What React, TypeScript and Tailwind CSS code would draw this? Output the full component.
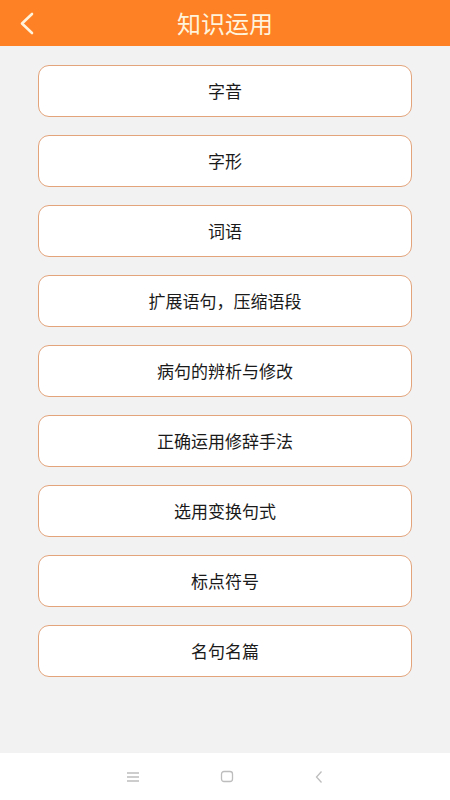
import React from 'react';

const items = [
  '字音',
  '字形',
  '词语',
  '扩展语句，压缩语段',
  '病句的辨析与修改',
  '正确运用修辞手法',
  '选用变换句式',
  '标点符号',
  '名句名篇',
];

export default function App() {
  return (
    <div
      className="flex flex-col w-[450px] h-[800px] bg-[#f2f2f2]"
      style={{ fontFamily: '"Noto Sans CJK SC", "Noto Sans", sans-serif' }}
    >
      {/* Header */}
      <div className="relative flex items-center justify-center h-[46px] bg-[#fe8125] shrink-0">
        <svg
          className="absolute left-[18px] top-[12px]"
          width="18"
          height="23"
          viewBox="0 0 18 23"
          fill="none"
        >
          <path d="M14 2 L4 11.5 L14 21" stroke="#fff3dc" strokeWidth="2.6" strokeLinecap="round" strokeLinejoin="round" />
        </svg>
        <h1 className="text-[24px] text-[#fff3dc] leading-none">知识运用</h1>
      </div>

      {/* List */}
      <div className="flex-1 flex flex-col gap-[18px] px-[38px] pt-[19px]">
        {items.map((t) => (
          <button
            key={t}
            className="h-[52px] w-full rounded-[11px] border border-[#e3a47c] bg-white text-[17px] text-[#1a1a1a]"
          >
            {t}
          </button>
        ))}
      </div>

      {/* System nav bar */}
      <div className="flex items-center justify-center h-[47px] bg-white shrink-0">
        <div className="flex items-center gap-[80px]">
          <svg width="14" height="12" viewBox="0 0 14 12">
            <path d="M1 2h12M1 6h12M1 10h12" stroke="#bdbdbd" strokeWidth="1.3" />
          </svg>
          <svg width="14" height="14" viewBox="0 0 14 14">
            <rect x="1.5" y="1.5" width="11" height="10" rx="2.5" stroke="#bdbdbd" strokeWidth="1.3" fill="none" />
          </svg>
          <svg width="10" height="14" viewBox="0 0 10 14">
            <path d="M7.5 1.5 L2.5 7 L7.5 12.5" stroke="#bdbdbd" strokeWidth="1.3" fill="none" />
          </svg>
        </div>
      </div>
    </div>
  );
}
